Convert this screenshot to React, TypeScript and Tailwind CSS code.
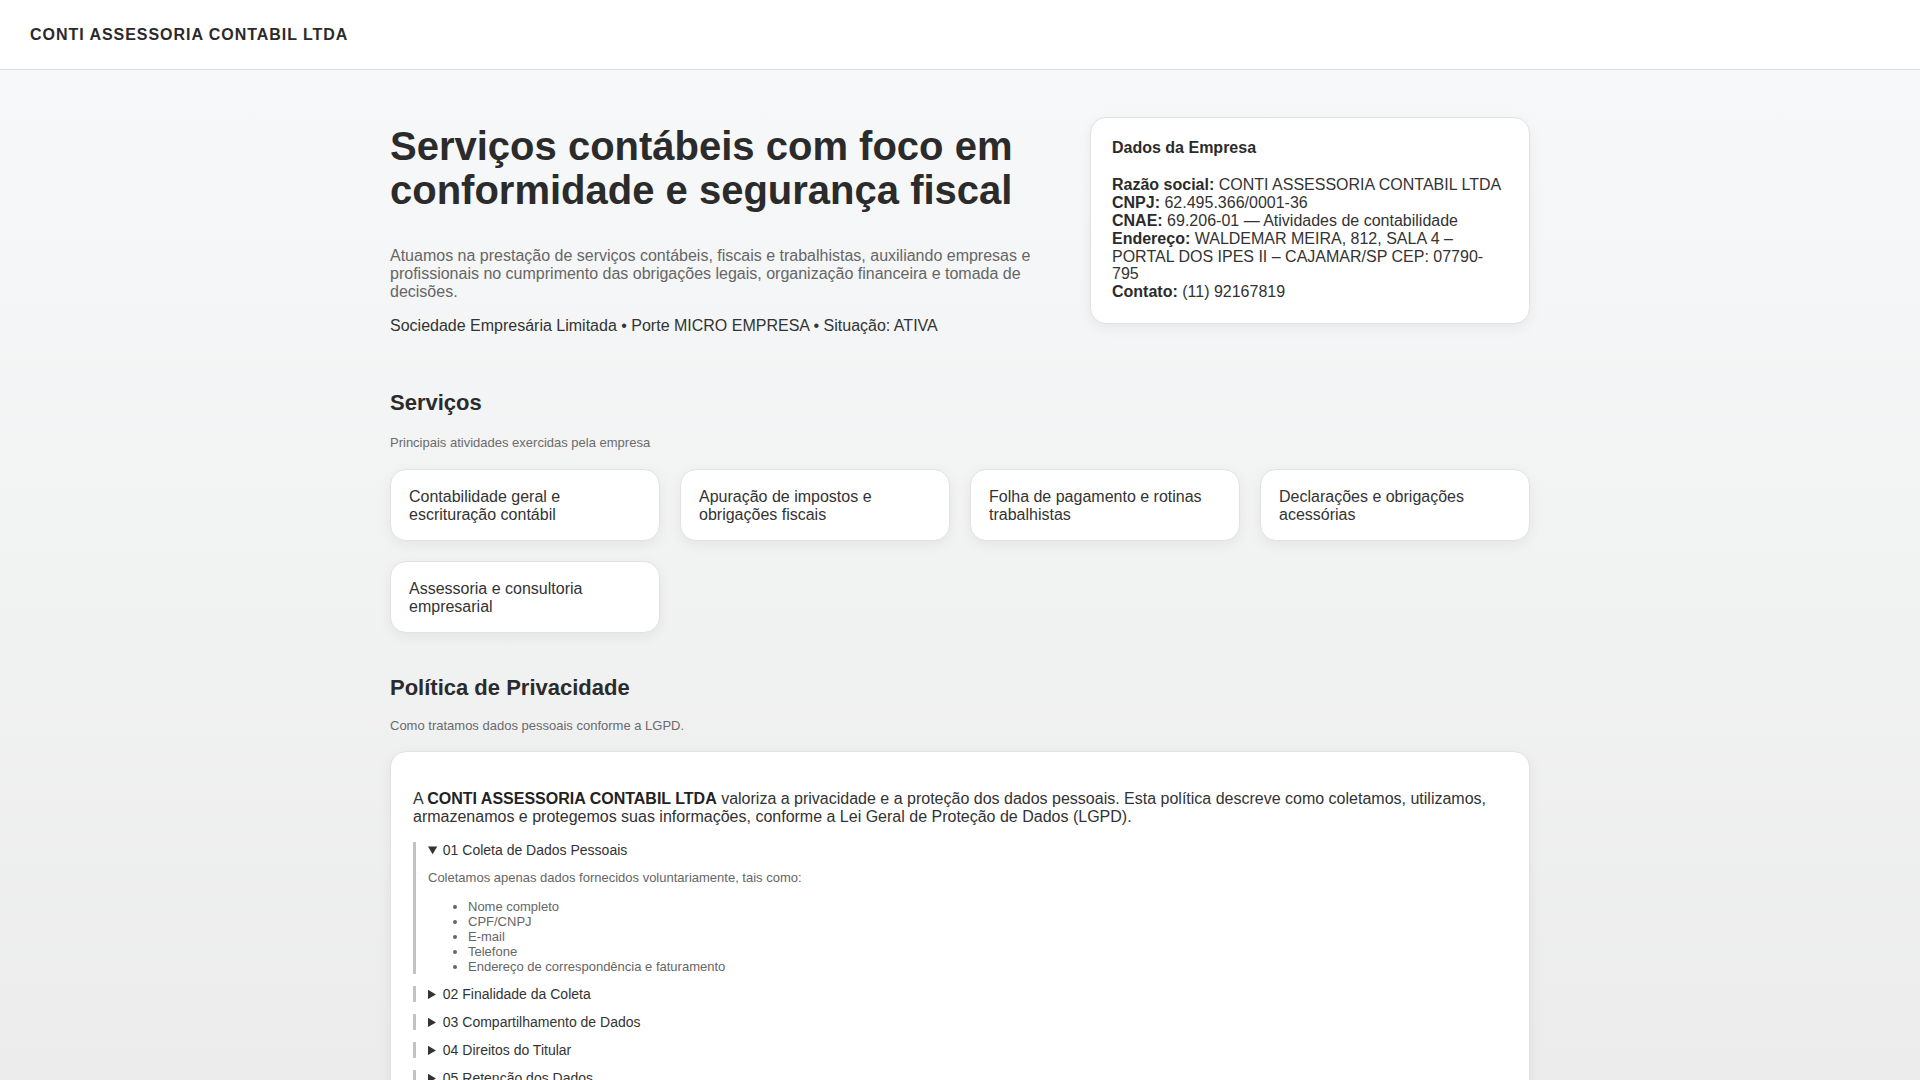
import React from 'react';

const SERVICES = [
    'Contabilidade geral e escrituração contábil',
    'Apuração de impostos e obrigações fiscais',
    'Folha de pagamento e rotinas trabalhistas',
    'Declarações e obrigações acessórias',
    'Assessoria e consultoria empresarial',
];

const COLETA = [
    'Nome completo',
    'CPF/CNPJ',
    'E-mail',
    'Telefone',
    'Endereço de correspondência e faturamento',
];

const SECTIONS = [
    { title: '02 Finalidade da Coleta', body: 'Os dados são utilizados exclusivamente para a prestação dos serviços contábeis contratados, emissão de documentos fiscais e cumprimento de obrigações legais.' },
    { title: '03 Compartilhamento de Dados', body: 'Os dados poderão ser compartilhados apenas com órgãos públicos e entidades quando exigido por lei.' },
    { title: '04 Direitos do Titular', body: 'O titular pode solicitar acesso, correção ou exclusão de seus dados a qualquer momento.' },
    { title: '05 Retenção dos Dados', body: 'Os dados são mantidos pelo prazo necessário ao cumprimento das obrigações legais e regulatórias.' },
    { title: '06 Segurança da Informação', body: 'Adotamos medidas técnicas e administrativas para proteger os dados pessoais contra acessos não autorizados.' },
    { title: '07 Contato', body: 'Dúvidas sobre esta política podem ser enviadas pelo telefone (11) 92167819.' },
];

export default function App() {
    return (
        <div className="min-h-screen bg-linear-to-b from-[#f8f9fa] to-[#eaeaea] text-[#2b2b2b] font-['Liberation_Sans',Arial,sans-serif] leading-[1.12]">
            <header className="h-[70px] bg-white border-b border-[#dcdcdc] flex items-center px-[30px]">
                <span className="text-[16px] font-bold tracking-[0.06em] text-[#2a2a2a]">CONTI ASSESSORIA CONTABIL LTDA</span>
            </header>

            <main className="max-w-[1140px] mx-auto pt-[47px] pb-16">
                {/* Hero */}
                <section className="grid grid-cols-[1fr_440px] gap-12 items-start">
                    <div className="pt-[7px]">
                        <h1 className="text-[40px] font-bold leading-[1.11] text-[#2b2b2b] mb-[34px]">
                            Serviços contábeis com foco em conformidade e segurança fiscal
                        </h1>
                        <p className="text-[16px] text-[#666] mb-[16px]">
                            Atuamos na prestação de serviços contábeis, fiscais e trabalhistas, auxiliando empresas e profissionais no cumprimento das obrigações legais, organização financeira e tomada de decisões.
                        </p>
                        <p className="text-[16px] text-[#333]">
                            Sociedade Empresária Limitada • Porte MICRO EMPRESA • Situação: ATIVA
                        </p>
                    </div>
                    <aside className="bg-white border border-[#e2e2e2] rounded-2xl px-[21px] pt-[21px] pb-[22px] shadow-[0_4px_14px_rgba(0,0,0,0.06)] text-[16px] text-[#333]">
                        <h3 className="font-bold text-[#2b2b2b] mb-[19px]">Dados da Empresa</h3>
                        <div>
                            <p><b className="text-[#2b2b2b]">Razão social:</b> CONTI ASSESSORIA CONTABIL LTDA</p>
                            <p><b className="text-[#2b2b2b]">CNPJ:</b> 62.495.366/0001-36</p>
                            <p><b className="text-[#2b2b2b]">CNAE:</b> 69.206-01 — Atividades de contabilidade</p>
                            <p><b className="text-[#2b2b2b]">Endereço:</b> WALDEMAR MEIRA, 812, SALA 4 – PORTAL DOS IPES II – CAJAMAR/SP CEP: 07790-795</p>
                            <p><b className="text-[#2b2b2b]">Contato:</b> (11) 92167819</p>
                        </div>
                    </aside>
                </section>

                {/* Serviços */}
                <section className="mt-[57px]">
                    <h2 className="text-[22px] font-bold text-[#2b2b2b]">Serviços</h2>
                    <p className="text-[13px] text-[#6b6b6b] mt-[19px] leading-[15px]">Principais atividades exercidas pela empresa</p>
                    <div className="grid grid-cols-4 gap-5 mt-[19px]">
                        {SERVICES.map(s => (
                            <div key={s} className="bg-white border border-[#e2e2e2] rounded-2xl px-[18px] py-[18px] h-[72px] text-[16px] text-[#333] shadow-[0_4px_14px_rgba(0,0,0,0.06)]">
                                {s}
                            </div>
                        ))}
                    </div>
                </section>

                {/* Privacidade */}
                <section className="mt-[43px]">
                    <h2 className="text-[22px] font-bold text-[#2b2b2b]">Política de Privacidade</h2>
                    <p className="text-[13px] text-[#6b6b6b] mt-[17px] leading-[15px]">Como tratamos dados pessoais conforme a LGPD.</p>
                    <div className="mt-[18px] bg-white border border-[#e2e2e2] rounded-2xl px-[22px] pt-[22px] pb-[24px] shadow-[0_4px_14px_rgba(0,0,0,0.06)]">
                        <p className="mt-4 mb-[16px] text-[16px] text-[#333] leading-[1.15]">
                            A <b className="text-[#222]">CONTI ASSESSORIA CONTABIL LTDA</b> valoriza a privacidade e a proteção dos dados pessoais. Esta política descreve como coletamos, utilizamos, armazenamos e protegemos suas informações, conforme a Lei Geral de Proteção de Dados (LGPD).
                        </p>

                        <details open className="border-l-[3px] border-[#c2c2c2] pl-[12px] mb-3">
                            <summary className="text-[14px] leading-4 text-[#333] cursor-pointer">01 Coleta de Dados Pessoais</summary>
                            <p className="text-[13px] text-[#666] leading-4 mt-3">Coletamos apenas dados fornecidos voluntariamente, tais como:</p>
                            <ul className="list-disc pl-10 mt-[13px] text-[13px] text-[#666] leading-[15px]">
                                {COLETA.map(c => <li key={c}>{c}</li>)}
                            </ul>
                        </details>

                        {SECTIONS.map(s => (
                            <details key={s.title} className="border-l-[3px] border-[#c2c2c2] pl-[12px] mb-3">
                                <summary className="text-[14px] leading-4 text-[#333] cursor-pointer">{s.title}</summary>
                                <p className="text-[13px] text-[#666] leading-4 mt-3">{s.body}</p>
                            </details>
                        ))}
                    </div>
                </section>
            </main>
        </div>
    );
}
